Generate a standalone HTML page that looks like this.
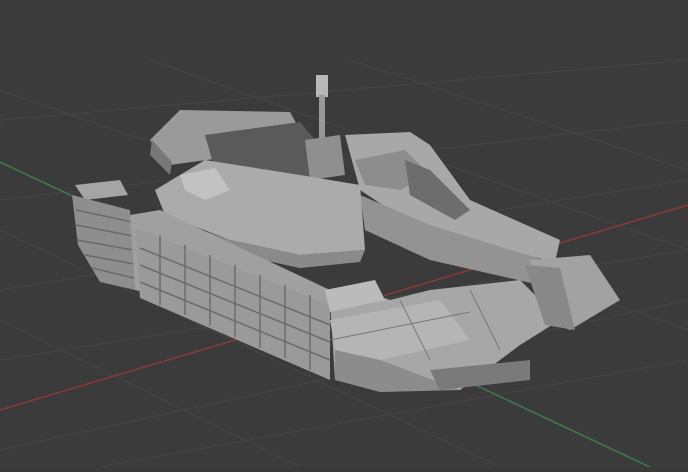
<!DOCTYPE html><html><head><style>html,body{margin:0;padding:0;background:#3a3a3a;overflow:hidden}</style></head><body>
<svg width="688" height="467" viewBox="0 0 688 467" xmlns="http://www.w3.org/2000/svg">
<rect width="688" height="467" fill="#3b3b3b"/>
<g stroke="#454545" stroke-width="1">
<line x1="0" y1="120" x2="688" y2="60"/><line x1="0" y1="200" x2="688" y2="120"/><line x1="0" y1="290" x2="688" y2="180"/>
<line x1="0" y1="360" x2="688" y2="250"/><line x1="0" y1="450" x2="688" y2="300"/><line x1="100" y1="467" x2="688" y2="360"/>
<line x1="0" y1="90" x2="688" y2="330"/><line x1="0" y1="230" x2="500" y2="467"/><line x1="0" y1="320" x2="300" y2="467"/>
<line x1="150" y1="60" x2="688" y2="250"/><line x1="350" y1="60" x2="688" y2="170"/>
</g>
<line x1="0" y1="410" x2="688" y2="205" stroke="#8a3a3a" stroke-width="1.5"/>
<line x1="0" y1="162" x2="650" y2="467" stroke="#3f7a4f" stroke-width="1.5"/>
<!-- basket -->
<polygon points="150,140 180,110 290,112 300,130 280,150 170,165" fill="#9a9a9a"/>
<polygon points="152,140 172,162 170,175 150,155" fill="#777"/>
<!-- turret rear dark -->
<polygon points="205,135 300,122 315,140 310,180 215,170" fill="#5a5a5a"/>
<!-- antenna -->
<rect x="316" y="75" width="12" height="22" fill="#b8b8b8"/>
<rect x="319" y="95" width="6" height="45" fill="#999"/>
<polygon points="305,140 340,135 345,175 310,180" fill="#8f8f8f"/>
<!-- right upper hull -->
<polygon points="345,135 410,132 430,145 470,200 560,240 555,262 420,230 360,190" fill="#a8a8a8"/>
<polygon points="355,160 405,150 430,175 400,190 365,185" fill="#8d8d8d"/>
<polygon points="405,160 430,170 470,210 455,220 410,195" fill="#6d6d6d"/>
<polygon points="360,195 430,225 550,262 540,285 430,260 365,230" fill="#939393"/>
<!-- turret front -->
<polygon points="155,190 205,160 300,175 360,185 365,250 300,255 230,240 165,215" fill="#ababab"/>
<polygon points="160,215 230,240 300,255 365,250 360,262 300,268 225,252 160,228" fill="#8a8a8a"/>
<polygon points="180,175 215,168 230,190 205,200 185,190" fill="#c2c2c2"/>
<!-- left box -->
<polygon points="75,185 120,180 128,195 85,200" fill="#a5a5a5"/>
<polygon points="72,195 130,210 135,290 100,282 78,245" fill="#8e8e8e"/>
<g stroke="#6a6a6a" stroke-width="1.5">
<line x1="76" y1="210" x2="132" y2="222"/><line x1="76" y1="225" x2="133" y2="236"/><line x1="77" y1="240" x2="133" y2="250"/><line x1="85" y1="255" x2="134" y2="264"/><line x1="92" y1="268" x2="134" y2="278"/>
</g>
<!-- main skirt -->
<polygon points="130,215 160,210 330,290 330,330 135,290" fill="#a0a0a0"/>
<polygon points="135,228 330,305 330,380 140,298" fill="#9a9a9a"/>
<g stroke="#6c6c6c" stroke-width="1.5">
<line x1="140" y1="248" x2="330" y2="325"/><line x1="140" y1="265" x2="330" y2="342"/><line x1="140" y1="282" x2="330" y2="360"/>
<line x1="160" y1="235" x2="160" y2="305"/><line x1="185" y1="245" x2="185" y2="315"/><line x1="210" y1="255" x2="210" y2="326"/><line x1="235" y1="265" x2="235" y2="337"/><line x1="260" y1="275" x2="260" y2="348"/><line x1="285" y1="285" x2="285" y2="358"/><line x1="310" y1="295" x2="310" y2="370"/>
</g>
<!-- front block -->
<polygon points="330,300 360,290 390,300 430,290 520,280 560,320 520,345 460,390 380,390 335,380" fill="#a7a7a7"/>
<polygon points="330,320 440,300 470,340 380,360 335,350" fill="#b5b5b5"/>
<polygon points="335,350 380,360 460,390 380,392 335,380" fill="#8c8c8c"/>
<polygon points="325,290 375,280 385,300 330,312" fill="#bbb"/>
<polygon points="430,370 530,360 530,380 440,390" fill="#7a7a7a"/>
<!-- right front box -->
<polygon points="530,260 590,255 620,300 570,330 545,320" fill="#a2a2a2"/>
<polygon points="525,265 560,268 575,330 545,325" fill="#888"/>
<g stroke="#777" stroke-width="1">
<line x1="330" y1="340" x2="470" y2="312"/><line x1="400" y1="300" x2="430" y2="360"/><line x1="470" y1="290" x2="500" y2="350"/>
</g>
</svg>
</body></html>
